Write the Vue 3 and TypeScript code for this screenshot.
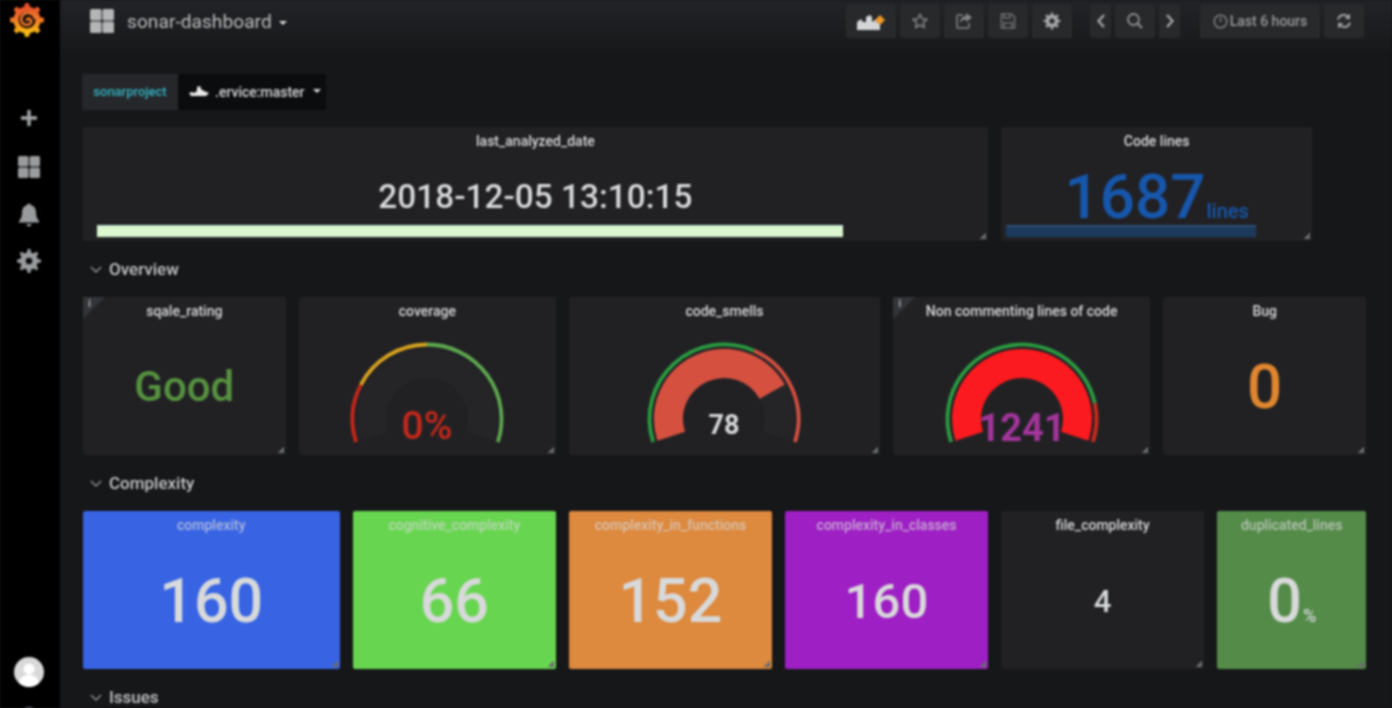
<script setup lang="ts">
interface Threshold {
  to: number
  color: string
}

interface Panel {
  title: string
  span: number
  kind: 'stat' | 'gauge' | 'bar'
  value: string
  valueSize?: number
  valueWeight?: number
  color?: string
  bg?: string
  unit?: string
  unitSize?: number
  info?: boolean
  fill?: number
  fillColor?: string
  thresholds?: Threshold[]
  textY?: number
  barLeft?: number
  barWidth?: number
  barColor?: string
}

const CY = 94
const CX = 90

// gauge runs from 18deg below the left horizon round to 18deg below the right one
const pt = (frac: number, r: number) => {
  const deg = ((-18 + frac * 216) * Math.PI) / 180
  return `${(CX - r * Math.cos(deg)).toFixed(2)} ${(CY - r * Math.sin(deg)).toFixed(2)}`
}

const strokeArc = (from: number, to: number, r: number) => {
  const large = (to - from) * 216 > 180 ? 1 : 0
  return `M${pt(from, r)} A${r} ${r} 0 ${large} 1 ${pt(to, r)}`
}

const gearPath = (cx: number, cy: number, outer: number, inner: number, teeth: number) => {
  const points: string[] = []
  const step = (Math.PI * 2) / teeth
  for (let i = 0; i < teeth; i++) {
    const a = i * step
    const list: [number, number][] = [
      [a - step * 0.28, inner],
      [a - step * 0.16, outer],
      [a + step * 0.16, outer],
      [a + step * 0.28, inner]
    ]
    for (const [ang, r] of list) {
      points.push(`${(cx + r * Math.sin(ang)).toFixed(2)} ${(cy - r * Math.cos(ang)).toFixed(2)}`)
    }
  }
  return 'M' + points.join(' L') + 'Z'
}

const navButtons = ['w-add', 'w-star', 'w-share', 'w-save', 'w-cog']

const topRow: Panel[] = [
  {
    title: 'last_analyzed_date',
    span: 17,
    kind: 'bar',
    value: '2018-12-05 13:10:15',
    valueSize: 33.4,
    valueWeight: 500,
    color: '#d8d9da',
    barLeft: 14,
    barWidth: 746,
    barColor: '#dcf7cf'
  },
  {
    title: 'Code lines',
    span: 6,
    kind: 'bar',
    value: '1687',
    valueSize: 62,
    valueWeight: 500,
    color: '#1657ac',
    unit: 'lines',
    unitSize: 20,
    barLeft: 5,
    barWidth: 250,
    barColor: '#1d3a5c'
  }
]

const overview: Panel[] = [
  { title: 'sqale_rating', span: 4, kind: 'stat', value: 'Good', valueSize: 42, valueWeight: 500, color: '#56923f', info: true },
  {
    title: 'coverage',
    span: 5,
    kind: 'gauge',
    value: '0%',
    valueSize: 39,
    valueWeight: 500,
    color: '#c4281b',
    textY: 114,
    fill: 0,
    thresholds: [
      { to: 0.21, color: '#c4281b' },
      { to: 0.5, color: '#d6a21f' },
      { to: 1, color: '#5ea94f' }
    ]
  },
  {
    title: 'code_smells',
    span: 6,
    kind: 'gauge',
    value: '78',
    valueSize: 27,
    valueWeight: 700,
    color: '#d8d9da',
    textY: 109,
    fill: 0.78,
    fillColor: '#d65040',
    thresholds: [
      { to: 0.61, color: '#2a9c41' },
      { to: 1, color: '#d65040' }
    ]
  },
  {
    title: 'Non commenting lines of code',
    span: 5,
    kind: 'gauge',
    value: '1241',
    valueSize: 38,
    valueWeight: 700,
    color: '#a2359a',
    textY: 116,
    info: true,
    fill: 1,
    fillColor: '#fb1a1f',
    thresholds: [
      { to: 0.86, color: '#2a9c41' },
      { to: 1, color: '#cf2a1c' }
    ]
  },
  { title: 'Bug', span: 4, kind: 'stat', value: '0', valueSize: 62, valueWeight: 500, color: '#e0862f' }
]

const complexity: Panel[] = [
  { title: 'complexity', span: 5, kind: 'stat', value: '160', valueSize: 61, valueWeight: 500, bg: '#3864e4' },
  { title: 'cognitive_complexity', span: 4, kind: 'stat', value: '66', valueSize: 61, valueWeight: 500, bg: '#68d551' },
  { title: 'complexity_in_functions', span: 4, kind: 'stat', value: '152', valueSize: 61, valueWeight: 500, bg: '#dd893e' },
  { title: 'complexity_in_classes', span: 4, kind: 'stat', value: '160', valueSize: 49, valueWeight: 500, bg: '#9e20c4' },
  { title: 'file_complexity', span: 4, kind: 'stat', value: '4', valueSize: 31, valueWeight: 500 },
  { title: 'duplicated_lines', span: 3, kind: 'stat', value: '0', valueSize: 61, valueWeight: 500, unit: '%', unitSize: 18, bg: '#548b49' }
]
</script>

<template>
  <div class="app">
    <aside class="sidebar">
      <svg class="logo" width="36" height="40" viewBox="0 0 36 40">
        <defs>
          <linearGradient id="sun" x1="0" y1="1" x2="0" y2="0">
            <stop offset="0" stop-color="#fbc20f" />
            <stop offset="0.55" stop-color="#f2752a" />
            <stop offset="1" stop-color="#e8502c" />
          </linearGradient>
        </defs>
        <path :d="gearPath(18, 20, 17, 13, 8)" fill="url(#sun)" />
        <circle cx="18" cy="20" r="13.5" fill="url(#sun)" />
        <circle cx="18" cy="20" r="8.5" fill="#1a0f08" />
        <path d="M26 18c-2-6-10-7-13-2-2 4 0 9 5 9 3 0 5-3 4-5-1-2-4-2-4 0" fill="none" stroke="#f0782a" stroke-width="2.6" stroke-linecap="round" />
      </svg>
      <svg class="side-icon first" width="24" height="24" viewBox="0 0 24 24">
        <path d="M10.3 4h3.4v6.3H20v3.4h-6.3V20h-3.4v-6.3H4v-3.4h6.3z" fill="#a4a5a7" />
      </svg>
      <svg class="side-icon grid-icon" width="28" height="28" viewBox="0 0 28 28">
        <g fill="#9a9b9d">
          <rect x="3" y="3" width="10.5" height="10.5" rx="1.5" />
          <rect x="14.5" y="3" width="10.5" height="10.5" rx="1.5" />
          <rect x="3" y="14.5" width="10.5" height="10.5" rx="1.5" />
          <rect x="14.5" y="14.5" width="10.5" height="10.5" rx="1.5" />
        </g>
      </svg>
      <svg class="side-icon" width="24" height="26" viewBox="0 0 24 26">
        <path d="M12 1.5c1 0 1.6.7 1.8 1.6 3.4.8 5.2 3.6 5.2 7.2 0 4.3 1 6.7 3 8.700v1.500H2V19c2-2 3-4.400 3-8.700 0-3.600 1.800-6.400 5.200-7.200.2-.9.800-1.600 1.800-1.600zM9.500 22h5c0 1.400-1.100 2.500-2.500 2.500S9.500 23.400 9.500 22z" fill="#9a9b9d" />
      </svg>
      <svg class="side-icon cog-icon" width="26" height="26" viewBox="0 0 26 26">
        <path :d="gearPath(13, 13, 12, 8.6, 8)" fill="#9a9b9d" />
        <circle cx="13" cy="13" r="8.8" fill="#9a9b9d" />
        <circle cx="13" cy="13" r="3.3" fill="#0a0a0b" />
      </svg>
      <div class="side-spacer"></div>
      <div class="avatar">
        <svg width="30" height="30" viewBox="0 0 30 30">
          <circle cx="15" cy="15" r="15" fill="#d9d9d9" />
          <circle cx="15" cy="12" r="5.5" fill="#fff" />
          <path d="M5 26c1-6 5-8 10-8s9 2 10 8c-3 2.6-6 4-10 4s-7-1.4-10-4z" fill="#fff" />
        </svg>
      </div>
      <div class="help-dot"></div>
    </aside>

    <div class="page">
      <header class="topnav">
        <svg class="nav-grid" width="26" height="26" viewBox="0 0 26 26">
          <g fill="#b4b5b7">
            <rect x="1" y="1" width="11.5" height="11.5" rx="1.5" />
            <rect x="13.5" y="1" width="11.5" height="11.5" rx="1.5" />
            <rect x="1" y="13.5" width="11.5" height="11.5" rx="1.5" />
            <rect x="13.5" y="13.5" width="11.5" height="11.5" rx="1.5" />
          </g>
        </svg>
        <span class="dash-title">sonar-dashboard</span>
        <span class="caret big"></span>
        <div class="nav-right">
          <div class="nav-group">
            <button v-for="name in navButtons" :key="name" class="nav-btn" :class="name">
              <svg v-if="name === 'w-add'" width="30" height="20" viewBox="0 0 30 20">
                <path d="M1 19v-8l4-3 2 3h3V6l4-2 2 2v5l3-2h2v3h3v7z" fill="#d4d5d6" />
                <path d="M24 4l5 5-5 5-5-5z" fill="#f09a28" />
              </svg>
              <svg v-else-if="name === 'w-star'" width="18" height="18" viewBox="0 0 18 18">
                <path d="M9 2l2.100 4.700 5 .5-3.800 3.400 1.100 5L9 13l-4.400 2.600 1.100-5L1.900 7.200l5-.5z" fill="none" stroke="#858688" stroke-width="1.5" stroke-linejoin="round" />
              </svg>
              <svg v-else-if="name === 'w-share'" width="18" height="18" viewBox="0 0 18 18">
                <path d="M8 3H3.500C2.700 3 2 3.700 2 4.500v10c0 .8.700 1.500 1.500 1.500h9c.8 0 1.500-.7 1.500-1.500V11" fill="none" stroke="#6e6f72" stroke-width="2" />
                <path d="M11 1l6 4.500L11 10V7.500c-3 0-4.500 1-6 4 0-4.500 2-7 6-7.500z" fill="#858688" />
              </svg>
              <svg v-else-if="name === 'w-save'" width="16" height="18" viewBox="0 0 16 18">
                <path d="M1.500 2h10l3 3v10.500c0 .3-.2.5-.5.5H2c-.3 0-.5-.2-.5-.5z" fill="none" stroke="#6e6f72" stroke-width="1.6" />
                <path d="M4 2v4h6V2M4 16v-5h8v5" fill="none" stroke="#6e6f72" stroke-width="1.5" />
              </svg>
              <svg v-else width="18" height="18" viewBox="0 0 18 18">
                <path :d="gearPath(9, 9, 8.5, 6.2, 8)" fill="#a4a5a7" />
                <circle cx="9" cy="9" r="6.3" fill="#a4a5a7" />
                <circle cx="9" cy="9" r="2.6" fill="#27282b" />
              </svg>
            </button>
          </div>
          <div class="nav-group time-nav">
            <button class="nav-btn w-arrow">
              <svg width="10" height="16" viewBox="0 0 10 16"><path d="M8 2L2.500 8 8 14" fill="none" stroke="#a4a5a7" stroke-width="2.4" /></svg>
            </button>
            <button class="nav-btn w-zoom">
              <svg width="18" height="18" viewBox="0 0 18 18">
                <circle cx="7.5" cy="7.5" r="5.5" fill="none" stroke="#8e8f91" stroke-width="1.8" />
                <path d="M11.500 11.500L16 16" stroke="#8e8f91" stroke-width="2.2" />
              </svg>
            </button>
            <button class="nav-btn w-arrow">
              <svg width="10" height="16" viewBox="0 0 10 16"><path d="M2 2l5.500 6L2 14" fill="none" stroke="#a4a5a7" stroke-width="2.4" /></svg>
            </button>
          </div>
          <div class="nav-group time-range">
            <button class="nav-btn w-range">
              <svg width="15" height="15" viewBox="0 0 15 15">
                <circle cx="7.5" cy="7.5" r="6.3" fill="none" stroke="#8e8f91" stroke-width="1.3" />
                <path d="M7.500 3.500v4.300" stroke="#8e8f91" stroke-width="1.3" />
              </svg>
              <span>Last 6 hours</span>
            </button>
            <button class="nav-btn w-refresh">
              <svg width="18" height="18" viewBox="0 0 18 18">
                <path d="M3 7.500C3.800 4.600 6.200 3 9 3c1.800 0 3.300.7 4.300 1.800" fill="none" stroke="#a4a5a7" stroke-width="2" />
                <path d="M15 1.500V7h-5.200z" fill="#a4a5a7" />
                <path d="M15 10.500C14.200 13.400 11.800 15 9 15c-1.800 0-3.300-.7-4.300-1.800" fill="none" stroke="#a4a5a7" stroke-width="2" />
                <path d="M3 16.500V11h5.200z" fill="#a4a5a7" />
              </svg>
            </button>
          </div>
        </div>
      </header>

      <main class="content">
        <div class="var-row">
          <label class="var-label">sonarproject</label>
          <div class="var-value">
            <svg width="22" height="12" viewBox="0 0 20 12">
              <path d="M0 7l3-1 2 1 3-2V1l3-1 1 3 3 2 5 2-3 3H2z" fill="#e8e8e8" />
            </svg>
            <span>.ervice:master</span>
            <span class="caret"></span>
          </div>
        </div>

        <section class="grid row-top">
          <article v-for="p in topRow" :key="p.title" class="panel" :style="{ gridColumn: `span ${p.span}` }">
            <h3 class="panel-title">{{ p.title }}</h3>
            <div class="panel-body bar-body">
              <span class="stat-value" :style="{ fontSize: p.valueSize + 'px', fontWeight: p.valueWeight, color: p.color }">{{ p.value }}<small v-if="p.unit" :style="{ fontSize: p.unitSize + 'px' }">{{ p.unit }}</small></span>
            </div>
            <div class="spark-bar" :style="{ marginLeft: p.barLeft + 'px', width: p.barWidth + 'px', background: p.barColor }"></div>
          </article>
        </section>

        <div class="row-head">
          <svg width="14" height="14" viewBox="0 0 14 14"><path d="M2 5l5 5 5-5" fill="none" stroke="#8e8f91" stroke-width="1.5" /></svg>
          <span>Overview</span>
        </div>

        <section class="grid row-tall">
          <article v-for="p in overview" :key="p.title" class="panel" :style="{ gridColumn: `span ${p.span}` }">
            <span v-if="p.info" class="info-corner"><i>i</i></span>
            <h3 class="panel-title">{{ p.title }}</h3>
            <div v-if="p.kind === 'gauge'" class="panel-body gauge-body">
              <svg width="180" height="130" viewBox="0 0 180 130">
                <path :d="strokeArc(0, 1, 55.5)" fill="none" stroke="#252527" stroke-width="29" />
                <path v-if="p.fill" :d="strokeArc(0, p.fill, 55.5)" fill="none" :stroke="p.fillColor" stroke-width="29" />
                <path
                  v-for="(t, i) in p.thresholds"
                  :key="t.color"
                  :d="strokeArc(i === 0 ? 0 : p.thresholds![i - 1].to, t.to, 74.5)"
                  fill="none"
                  :stroke="t.color"
                  stroke-width="3.8"
                />
                <text :x="CX" :y="p.textY" text-anchor="middle" class="gauge-text" :font-size="p.valueSize" :font-weight="p.valueWeight" :fill="p.color">{{ p.value }}</text>
              </svg>
            </div>
            <div v-else class="panel-body">
              <span class="stat-value" :style="{ fontSize: p.valueSize + 'px', fontWeight: p.valueWeight, color: p.color }">{{ p.value }}</span>
            </div>
          </article>
        </section>

        <div class="row-head">
          <svg width="14" height="14" viewBox="0 0 14 14"><path d="M2 5l5 5 5-5" fill="none" stroke="#8e8f91" stroke-width="1.5" /></svg>
          <span>Complexity</span>
        </div>

        <section class="grid row-tall">
          <article
            v-for="p in complexity"
            :key="p.title"
            class="panel"
            :class="{ colored: p.bg }"
            :style="{ gridColumn: `span ${p.span}`, background: p.bg }"
          >
            <h3 class="panel-title">{{ p.title }}</h3>
            <div class="panel-body">
              <span class="stat-value" :style="{ fontSize: p.valueSize + 'px', fontWeight: p.valueWeight }">{{ p.value }}<small v-if="p.unit" :style="{ fontSize: p.unitSize + 'px' }">{{ p.unit }}</small></span>
            </div>
          </article>
        </section>

        <div class="row-head">
          <svg width="14" height="14" viewBox="0 0 14 14"><path d="M2 5l5 5 5-5" fill="none" stroke="#8e8f91" stroke-width="1.5" /></svg>
          <span>Issues</span>
        </div>
      </main>
    </div>
  </div>
</template>

<style>
html,
body {
  margin: 0;
  background: #161719;
  overflow: hidden;
}
</style>

<style scoped>
.app {
  display: flex;
  width: 1392px;
  height: 708px;
  overflow: hidden;
  background: #161719;
  font-family: Roboto, "Liberation Sans", sans-serif;
  color: #d8d9da;
  filter: blur(1px);
}

.sidebar {
  width: 60px;
  flex: none;
  height: 708px;
  background: #000;
  display: flex;
  flex-direction: column;
  align-items: center;
  box-sizing: border-box;
  padding-right: 2px;
  overflow: hidden;
}

.logo {
  margin-right: 4px;
}

.side-icon {
  margin-top: 21px;
}

.side-icon.first {
  margin-top: 66px;
}

.side-icon.grid-icon {
  margin-top: 23px;
}

.side-icon.cog-icon {
  margin-top: 20px;
}

.side-spacer {
  flex: 1;
}

.avatar {
  height: 30px;
  margin-bottom: 20px;
}

.help-dot {
  width: 22px;
  height: 22px;
  border-radius: 50%;
  border: 2px solid #8e8f91;
  margin-bottom: -25px;
  flex: none;
}

.page {
  flex: 1;
  min-width: 0;
}

.topnav {
  height: 50px;
  display: flex;
  align-items: center;
  box-sizing: border-box;
  padding: 0 28px 8px 29px;
  background: linear-gradient(#222326, #18191b);
}

.nav-grid {
  margin-right: 12px;
}

.dash-title {
  font-size: 19.2px;
  color: #bdbec0;
  margin-right: 7px;
}

.caret {
  display: inline-block;
  width: 0;
  height: 0;
  border-left: 4px solid transparent;
  border-right: 4px solid transparent;
  border-top: 4px solid #d8d9da;
}

.caret.big {
  margin-top: 3px;
}

.nav-right {
  margin-left: auto;
  display: flex;
  align-items: center;
}

.nav-group {
  display: flex;
  gap: 4px;
}

.time-nav {
  margin-left: 18px;
}

.time-range {
  margin-left: 20px;
}

.nav-btn {
  height: 34px;
  padding: 0;
  border: 0;
  border-radius: 2px;
  background: #28292b;
  display: flex;
  align-items: center;
  justify-content: center;
  color: #9a9b9d;
  font-family: inherit;
  font-size: 14px;
  font-weight: 500;
}

.w-add {
  width: 50px;
}

.w-star,
.w-share,
.w-save,
.w-cog,
.w-zoom,
.w-refresh {
  width: 40px;
}

.w-arrow {
  width: 21px;
}

.w-range {
  width: 120px;
  gap: 2px;
}

.content {
  padding: 24px 26px 0 23px;
}

.var-row {
  display: flex;
  height: 36px;
  margin-bottom: 17px;
  margin-left: -1px;
  font-size: 13px;
  font-weight: 500;
}

.var-label {
  width: 96px;
  padding-bottom: 1px;
  background: #26272a;
  color: #33b5c5;
  display: flex;
  align-items: center;
  justify-content: center;
  border-radius: 2px 0 0 2px;
}

.var-value {
  width: 148px;
  background: #0b0c0e;
  color: #d8d9da;
  display: flex;
  align-items: center;
  gap: 5px;
  padding: 0 0 1px 10px;
  box-sizing: border-box;
  font-size: 14px;
}

.var-value .caret {
  margin-left: 3px;
  margin-bottom: 2px;
}

.grid {
  display: grid;
  grid-template-columns: repeat(24, 1fr);
  column-gap: 13.5px;
  width: 1283px;
}

.row-top {
  grid-template-rows: 114px;
}

.row-tall {
  grid-template-rows: 158px;
}

.row-head {
  height: 56px;
  display: flex;
  align-items: center;
  gap: 6px;
  padding: 0 0 1px 6px;
  box-sizing: border-box;
  font-size: 17px;
  font-weight: 500;
  color: #c4c5c7;
}

.panel {
  position: relative;
  display: flex;
  flex-direction: column;
  min-width: 0;
  min-height: 0;
  background: #212124;
  border-radius: 2px;
}

.panel::after {
  content: "";
  position: absolute;
  right: 2px;
  bottom: 2px;
  width: 7px;
  height: 7px;
  background: linear-gradient(135deg, transparent 55%, #6a6b6e 55%);
}

.panel-title {
  margin: 0;
  height: 28px;
  line-height: 28px;
  flex: none;
  text-align: center;
  font-size: 14px;
  font-weight: 500;
  color: #d8d9da;
  white-space: nowrap;
}

.colored .panel-title {
  opacity: 0.72;
}

.panel-body {
  flex: 1;
  display: flex;
  align-items: center;
  justify-content: center;
  padding-bottom: 6px;
  min-height: 0;
}

.bar-body {
  padding: 14px 0 0;
}

.gauge-body {
  padding-bottom: 0;
}

.stat-value {
  line-height: 1;
  color: #d8d9da;
  white-space: nowrap;
}

.stat-value small {
  margin-left: 1px;
}

.spark-bar {
  height: 12px;
  margin-bottom: 4px;
  flex: none;
  box-shadow: inset 0 2px 0 rgba(120, 170, 220, 0.18);
}

.gauge-text {
  font-family: Roboto, "Liberation Sans", sans-serif;
}

.info-corner {
  position: absolute;
  left: 0;
  top: 0;
  width: 0;
  height: 0;
  border-top: 22px solid #333437;
  border-right: 22px solid transparent;
}

.info-corner i {
  position: absolute;
  left: 5px;
  top: -22px;
  font-size: 11px;
  font-style: normal;
  font-weight: 700;
  color: #a4a5a7;
}
</style>
